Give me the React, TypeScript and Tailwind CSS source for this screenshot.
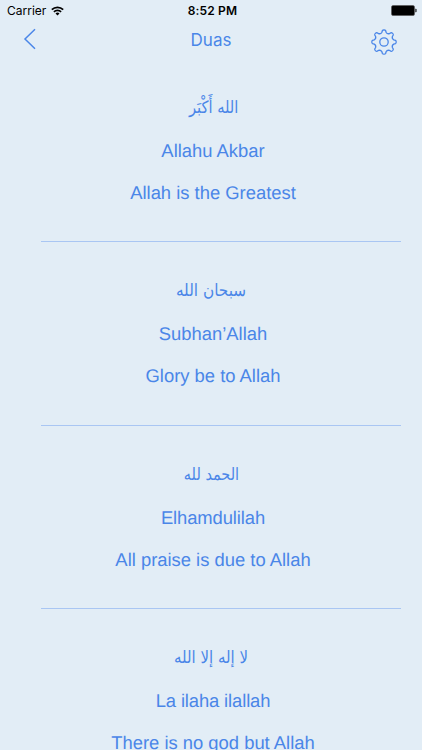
import React from 'react';

interface Dua {
  arabic: string;
  latin: string;
  meaning: string;
  arabicClass: string;
  latinClass: string;
}

const duas: Dua[] = [
  { arabic: 'الله أَكْبَر', latin: 'Allahu Akbar', meaning: 'Allah is the Greatest', arabicClass: 'ml-[1px] scale-x-[0.86]', latinClass: '' },
  { arabic: 'سبحان الله', latin: 'Subhan’Allah', meaning: 'Glory be to Allah', arabicClass: '-ml-[4px] scale-x-[0.9]', latinClass: '' },
  { arabic: 'الحمد لله', latin: 'Elhamdulilah', meaning: 'All praise is due to Allah', arabicClass: '-ml-[4px] scale-x-[0.85]', latinClass: '-tracking-[0.1px]' },
  { arabic: 'لا إله إلا الله', latin: 'La ilaha ilallah', meaning: 'There is no god but Allah', arabicClass: '-ml-[4px] scale-x-[0.88]', latinClass: '-tracking-[0.12px]' },
];

const polar = (deg: number, r: number) => {
  const a = (deg * Math.PI) / 180;
  return `${(13 + r * Math.sin(a)).toFixed(2)} ${(13 - r * Math.cos(a)).toFixed(2)}`;
};

// eight rounded teeth, one every 45 degrees
const gearPath =
  `M${polar(-8, 11.6)}` +
  [0, 45, 90, 135, 180, 225, 270, 315]
    .map((a) => `Q${polar(a - 6, 12.2)} ${polar(a, 12.2)}Q${polar(a + 6, 12.2)} ${polar(a + 8, 11.6)}L${polar(a + 12, 10)}Q${polar(a + 22.5, 8.4)} ${polar(a + 33, 10)}L${polar(a + 37, 11.6)}`)
    .join('') +
  'Z';

const StatusBar: React.FC = () => (
  <div className="grid h-[21px] shrink-0 grid-cols-3 items-center pl-[7px] pr-[5px] text-[12px] text-black">
    <div className="flex items-center gap-[5px] pt-[1px]">
      <span className="leading-[20px]">Carrier</span>
      <svg width="13" height="10" viewBox="0 0 13 10" fill="none" stroke="currentColor" strokeWidth="1.7">
        <path d="M0.8 3.7a8.1 8.1 0 0 1 11.4 0" />
        <path d="M2.9 5.9a5.1 5.1 0 0 1 7.2 0" />
        <path d="M6.5 9.6 4.5 7.5a2.9 2.9 0 0 1 4 0z" fill="currentColor" stroke="none" />
      </svg>
    </div>
    <span className="pl-[1px] pt-[1px] text-center font-semibold leading-[20px] tracking-[0.15px]">8:52 PM</span>
    <svg className="justify-self-end" width="26" height="11" viewBox="0 0 26 11">
      <rect x="0.5" y="0.5" width="23" height="10" rx="1.5" fill="#000" stroke="#555" strokeWidth="0.6" />
      <path d="M24.4 3.8h.5q.6 0 .6.7v2q0 .7-.6.7h-.5z" fill="#000" />
    </svg>
  </div>
);

const DuaRow: React.FC<{ dua: Dua }> = ({ dua }) => (
  <li className="ml-[41px] mr-[21px] flex h-[183.4px] shrink-0 flex-col items-center border-b border-[#a9c6f3] pt-[28px] pr-[16px]">
    <p dir="rtl" className={`h-[42px] whitespace-nowrap font-['DejaVu_Sans'] text-[17px] leading-[42px] ${dua.arabicClass}`}>{dua.arabic}</p>
    <p className={`h-[43px] whitespace-nowrap leading-[43px] ${dua.latinClass}`}>{dua.latin}</p>
    <p className="h-[42px] whitespace-nowrap leading-[42px]">{dua.meaning}</p>
  </li>
);

const App: React.FC = () => (
  <div className="flex h-[750px] w-[422px] flex-col overflow-hidden bg-[#e2edf6] font-['Inter',sans-serif] text-[#4a86e8]">
    <StatusBar />
    <header className="grid h-[38px] shrink-0 grid-cols-3 items-center pl-[23px] pr-[25px]">
      <button aria-label="Back" className="justify-self-start pb-[3px]">
        <svg width="13" height="22" viewBox="0 0 13 22" fill="none" stroke="currentColor" strokeWidth="1.5">
          <path d="M12 1.3 2 11l10 9.7" />
        </svg>
      </button>
      <h1 className="pl-[2px] pt-[1px] text-center text-[17px]">Duas</h1>
      <button aria-label="Settings" className="justify-self-end pt-[3px]">
        <svg width="26" height="26" viewBox="0 0 26 26" fill="none" stroke="currentColor" strokeWidth="1.3" strokeLinejoin="round">
          <path d={gearPath} />
          <circle cx="13" cy="13" r="4.2" />
        </svg>
      </button>
    </header>
    <ul className="flex flex-col font-['Liberation_Sans',sans-serif] text-[18.4px] [text-rendering:geometricPrecision]">
      {duas.map((dua) => (
        <DuaRow key={dua.latin} dua={dua} />
      ))}
    </ul>
  </div>
);

export default App;
